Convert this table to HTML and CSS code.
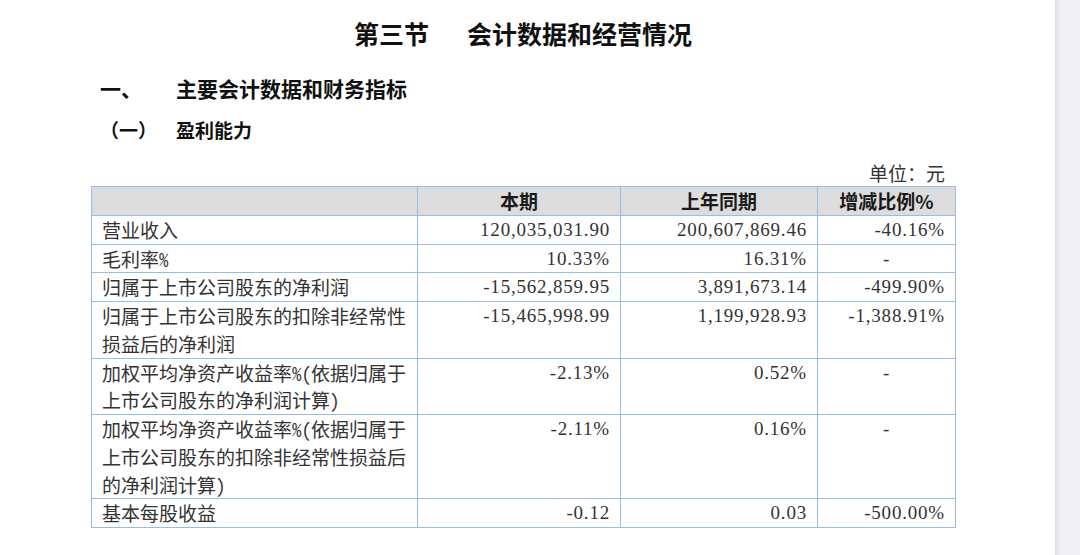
FILE: index.html
```html
<!DOCTYPE html>
<html lang="zh-CN">
<head>
<meta charset="utf-8">
<title>第三节 会计数据和经营情况</title>
<link rel="stylesheet" href="styles.css">
</head>
<body>
<div class="screen">
  <main class="page">
    <h1 class="title"><span class="sec">第三节</span>会计数据和经营情况</h1>
    <h2 class="h-one"><span class="num">一、</span><span>主要会计数据和财务指标</span></h2>
    <h3 class="h-two"><span class="num">（一）</span><span>盈利能力</span></h3>
    <div class="unit">单位：元</div>
    <table class="data">
      <colgroup>
        <col class="c1"><col class="c2"><col class="c3"><col class="c4">
      </colgroup>
      <thead>
        <tr><th></th><th>本期</th><th>上年同期</th><th>增减比例%</th></tr>
      </thead>
      <tbody>
        <tr><td class="lbl">营业收入</td><td class="n">120,035,031.90</td><td class="n">200,607,869.46</td><td class="n">-40.16%</td></tr>
        <tr><td class="lbl">毛利率%</td><td class="n">10.33%</td><td class="n">16.31%</td><td class="n mid">-</td></tr>
        <tr><td class="lbl">归属于上市公司股东的净利润</td><td class="n">-15,562,859.95</td><td class="n">3,891,673.14</td><td class="n">-499.90%</td></tr>
        <tr><td class="lbl">归属于上市公司股东的扣除非经常性损益后的净利润</td><td class="n">-15,465,998.99</td><td class="n">1,199,928.93</td><td class="n">-1,388.91%</td></tr>
        <tr><td class="lbl">加权平均净资产收益率%（依据归属于上市公司股东的净利润计算）</td><td class="n">-2.13%</td><td class="n">0.52%</td><td class="n mid">-</td></tr>
        <tr><td class="lbl">加权平均净资产收益率%（依据归属于上市公司股东的扣除非经常性损益后的净利润计算）</td><td class="n">-2.11%</td><td class="n">0.16%</td><td class="n mid">-</td></tr>
        <tr><td class="lbl">基本每股收益</td><td class="n">-0.12</td><td class="n">0.03</td><td class="n">-500.00%</td></tr>
      </tbody>
    </table>
  </main>
  <div class="edge"></div>
</div>
</body>
</html>
```
FILE: styles.css
```css
html, body {
  margin: 0;
  padding: 0;
  background: #ffffff;
}
.screen {
  display: flex;
  width: 1080px;
  height: 555px;
  overflow: hidden;
}
.page {
  width: 1055px;
  padding-left: 91px;
  box-sizing: border-box;
  font-family: "Noto Sans CJK SC", "Noto Sans", sans-serif;
  color: #111;
}
.edge {
  width: 25px;
  background: linear-gradient(to right, #dcdce0 0px, #e8e8ec 2px, #efeff4 6px, #f0f0f5 100%);
}
.title {
  width: 864px;
  margin: 15px 0 0 0;
  font-size: 25px;
  line-height: 36px;
  font-weight: 700;
  text-align: center;
  color: #111;
}
.title .sec {
  margin-right: 38px;
}
.h-one, .h-two {
  display: flex;
  margin: 0 0 0 9px;
  font-weight: 700;
  color: #111;
}
.h-one {
  margin-top: 22px;
  font-size: 21px;
  line-height: 30px;
}
.h-two {
  margin-top: 12px;
  font-size: 19px;
  line-height: 30px;
}
.num {
  width: 76px;
  flex: none;
}
.unit {
  width: 854px;
  margin-top: 15px;
  font-size: 19px;
  line-height: 26px;
  text-align: right;
  color: #333;
}
.data {
  width: 864px;
  table-layout: fixed;
  border-collapse: collapse;
  font-size: 19px;
  line-height: 27.75px;
  color: #333;
}
.c1 { width: 326px; }
.c2 { width: 203px; }
.c3 { width: 197px; }
.c4 { width: 138px; }
.data th, .data td {
  border: 1px solid #97bde6;
  padding: 0 10px;
  vertical-align: top;
}
.data th {
  background: #dcdcdc;
  font-weight: 700;
  color: #1a1a1a;
  text-align: center;
}
.data td.lbl {
  text-align: left;
  padding-right: 6px;
  font-feature-settings: "hwid" 1;
}
.data td.n {
  text-align: right;
  font-family: "Liberation Serif", "Noto Sans CJK SC", serif;
  letter-spacing: 0.8px;
  color: #333;
}
.data td.mid {
  text-align: center;
}
```
